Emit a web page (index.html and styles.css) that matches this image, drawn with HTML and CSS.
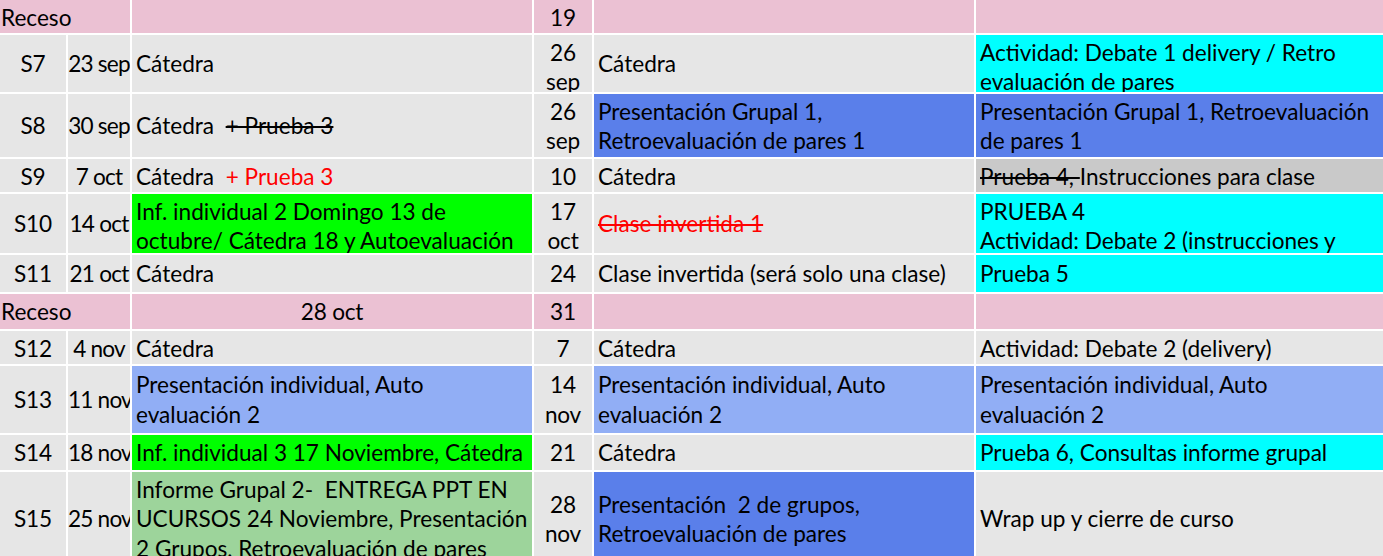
FILE: index.html
```html
<!DOCTYPE html>
<html lang="es">
<head>
<meta charset="utf-8">
<title>Calendario</title>
<link rel="stylesheet" href="styles.css">
</head>
<body>
<div class="sheet">
  <!-- Receso 1 -->
  <div class="c pink span2 left"><p>Receso</p></div>
  <div class="c pink"></div>
  <div class="c pink mid"><p>19</p></div>
  <div class="c pink"></div>
  <div class="c pink"></div>

  <!-- S7 -->
  <div class="c grey mid"><p>S7</p></div>
  <div class="c grey mid date"><p>23 sep</p></div>
  <div class="c grey"><p>Cátedra</p></div>
  <div class="c grey mid"><p>26<br>sep</p></div>
  <div class="c grey"><p>Cátedra</p></div>
  <div class="c cyan"><p>Actividad: Debate 1 delivery / Retro<br>evaluación de pares</p></div>

  <!-- S8 -->
  <div class="c grey mid"><p>S8</p></div>
  <div class="c grey mid date"><p>30 sep</p></div>
  <div class="c grey"><p>Cátedra  <s>+ Prueba 3</s></p></div>
  <div class="c grey mid"><p>26<br>sep</p></div>
  <div class="c blue"><p>Presentación Grupal 1,<br>Retroevaluación de pares 1</p></div>
  <div class="c blue"><p>Presentación Grupal 1, Retroevaluación<br>de pares 1</p></div>

  <!-- S9 -->
  <div class="c grey mid"><p>S9</p></div>
  <div class="c grey mid date"><p>7 oct</p></div>
  <div class="c grey"><p>Cátedra  <span class="red">+ Prueba 3</span></p></div>
  <div class="c grey mid"><p>10</p></div>
  <div class="c grey"><p>Cátedra</p></div>
  <div class="c dgrey"><p><s>Prueba 4, </s>Instrucciones para clase</p></div>

  <!-- S10 -->
  <div class="c grey mid"><p>S10</p></div>
  <div class="c grey mid date"><p>14 oct</p></div>
  <div class="c green"><p>Inf. individual 2 Domingo 13 de<br>octubre/ Cátedra 18 y Autoevaluación</p></div>
  <div class="c grey mid"><p>17<br>oct</p></div>
  <div class="c grey"><p><s class="red">Clase invertida 1</s></p></div>
  <div class="c cyan"><p>PRUEBA 4<br>Actividad: Debate 2 (instrucciones y</p></div>

  <!-- S11 -->
  <div class="c grey mid"><p>S11</p></div>
  <div class="c grey mid date"><p>21 oct</p></div>
  <div class="c grey"><p>Cátedra</p></div>
  <div class="c grey mid"><p>24</p></div>
  <div class="c grey"><p>Clase invertida (será solo una clase)</p></div>
  <div class="c cyan"><p>Prueba 5</p></div>

  <!-- Receso 2 -->
  <div class="c pink span2 left"><p>Receso</p></div>
  <div class="c pink mid"><p>28 oct</p></div>
  <div class="c pink mid"><p>31</p></div>
  <div class="c pink"></div>
  <div class="c pink"></div>

  <!-- S12 -->
  <div class="c grey mid"><p>S12</p></div>
  <div class="c grey mid date"><p>4 nov</p></div>
  <div class="c grey"><p>Cátedra</p></div>
  <div class="c grey mid"><p>7</p></div>
  <div class="c grey"><p>Cátedra</p></div>
  <div class="c grey"><p>Actividad: Debate 2 (delivery)</p></div>

  <!-- S13 -->
  <div class="c grey mid"><p>S13</p></div>
  <div class="c grey mid date"><p>11 nov</p></div>
  <div class="c lblue"><p>Presentación individual, Auto<br>evaluación 2</p></div>
  <div class="c grey mid"><p>14<br>nov</p></div>
  <div class="c lblue"><p>Presentación individual, Auto<br>evaluación 2</p></div>
  <div class="c lblue"><p>Presentación individual, Auto<br>evaluación 2</p></div>

  <!-- S14 -->
  <div class="c grey mid"><p>S14</p></div>
  <div class="c grey mid date"><p>18 nov</p></div>
  <div class="c green"><p>Inf. individual 3 17 Noviembre, Cátedra</p></div>
  <div class="c grey mid"><p>21</p></div>
  <div class="c grey"><p>Cátedra</p></div>
  <div class="c cyan"><p>Prueba 6, Consultas informe grupal</p></div>

  <!-- S15 -->
  <div class="c grey mid"><p>S15</p></div>
  <div class="c grey mid date"><p>25 nov</p></div>
  <div class="c lgreen"><p>Informe Grupal 2-  ENTREGA PPT EN<br>UCURSOS 24 Noviembre, Presentación<br>2 Grupos, Retroevaluación de pares</p></div>
  <div class="c grey mid"><p>28<br>nov</p></div>
  <div class="c blue"><p>Presentación  2 de grupos,<br>Retroevaluación de pares</p></div>
  <div class="c grey"><p>Wrap up y cierre de curso</p></div>
</div>
</body>
</html>
```

FILE: styles.css
```css
html, body {
  margin: 0;
  padding: 0;
  background: #ffffff;
  overflow: hidden;
}

.sheet {
  display: grid;
  grid-template-columns: 66px 62px 400px 58px 380px 409px;
  grid-template-rows: 33px 57px 63px 33px 59px 37px 35px 33px 67px 35px 94px;
  gap: 2px;
  width: 1385px;
  font-family: Lato, "Open Sans", sans-serif;
  font-size: 22.6px;
  line-height: 29.3px;
  color: #000000;
}

.c {
  display: flex;
  flex-direction: column;
  justify-content: safe center;
  align-items: flex-start;
  overflow: hidden;
  padding: 3px 3px 3px 4px;
  min-width: 0;
}

.c p {
  margin: 0;
  white-space: pre;
}

.mid {
  align-items: safe center;
  text-align: center;
  padding-left: 0;
  padding-right: 0;
}

.mid p {
  letter-spacing: -0.2px;
}

.date p {
  letter-spacing: -0.8px;
}

.left {
  padding-left: 1px;
}

.span2 {
  grid-column: span 2;
}

.pink { background: #ebc1d3; }
.grey { background: #e6e6e6; }
.dgrey { background: #c9c9c9; }
.cyan { background: #00ffff; }
.blue { background: #5a7fea; }
.lblue { background: #91aef5; }
.green { background: #00ff00; }
.lgreen { background: #9dd49b; }

.red { color: #ff0000; }

s {
  text-decoration: line-through;
}
```
